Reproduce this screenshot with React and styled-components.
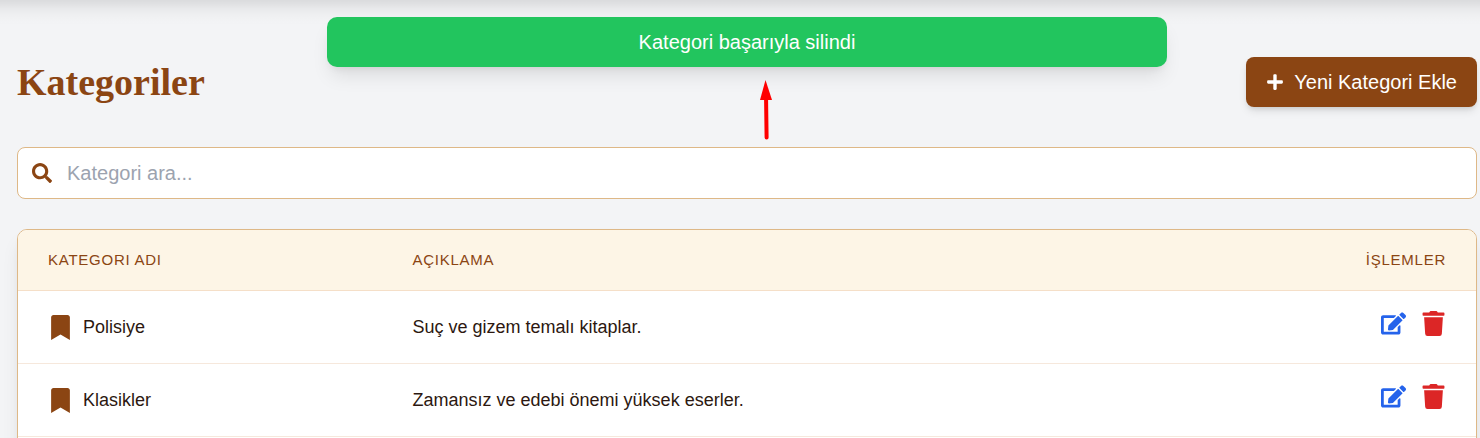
import React, { useState } from "react";
import styled, { createGlobalStyle } from "styled-components";
import { FaBookmark, FaEdit, FaPlus, FaSearch, FaTrash } from "react-icons/fa";

const GlobalStyle = createGlobalStyle`
  *, *::before, *::after { box-sizing: border-box; }
  body {
    margin: 0;
    background: #f3f4f6;
    color: #2c1810;
    font-family: "Liberation Sans", Arial, sans-serif;
    font-size: 20px;
    line-height: 30px;
  }
  svg { display: block; flex-shrink: 0; }
`;

const Page = styled.main`
  position: relative;
  height: 100vh;
  overflow: hidden;
  padding: 57px 3px 0 17px;
  background: linear-gradient(
      to bottom,
      rgba(0, 0, 0, 0.1) 0,
      rgba(0, 0, 0, 0.08) 4px,
      rgba(0, 0, 0, 0.045) 9px,
      rgba(0, 0, 0, 0.02) 15px,
      rgba(0, 0, 0, 0.005) 22px,
      transparent 27px
    )
    #f3f4f6;
`;

const ToastLayer = styled.div`
  position: absolute;
  top: 17px;
  left: 17px;
  right: 3px;
  display: flex;
  justify-content: center;
`;

const Toast = styled.div`
  width: 100%;
  max-width: 840px;
  padding: 10px 20px;
  border-radius: 10px;
  background: #22c55e;
  color: #fff;
  text-align: center;
  box-shadow: 0 12px 19px -4px rgba(0, 0, 0, 0.1),
    0 5px 8px -5px rgba(0, 0, 0, 0.1);
`;

const Pointer = styled.svg`
  position: absolute;
  top: 80px;
  left: 759px;
`;

const Header = styled.header`
  display: flex;
  align-items: center;
  justify-content: space-between;
  margin-bottom: 40px;
`;

const Title = styled.h1`
  margin: 0;
  color: #8b4513;
  font-family: "Liberation Serif", "Times New Roman", serif;
  font-size: 38px;
  font-weight: 700;
  line-height: 50px;
`;

const AddButton = styled.button`
  display: flex;
  align-items: center;
  gap: 10px;
  padding: 10px 20px;
  border: 0;
  border-radius: 8px;
  background: #8b4513;
  color: #fff;
  font: inherit;
  cursor: pointer;
  box-shadow: 0 5px 8px -1px rgba(0, 0, 0, 0.1),
    0 3px 5px -2px rgba(0, 0, 0, 0.1);
`;

const SearchBox = styled.label`
  display: flex;
  align-items: center;
  gap: 15px;
  height: 52px;
  margin-bottom: 30px;
  padding: 0 14px;
  border: 1px solid #deb887;
  border-radius: 8px;
  background: #fff;
  color: #8b4513;
`;

const SearchInput = styled.input`
  flex: 1;
  min-width: 0;
  padding: 0;
  border: 0;
  outline: 0;
  background: transparent;
  color: #2c1810;
  font: inherit;

  &::placeholder { color: #9ca3af; opacity: 1; }
`;

const Card = styled.section`
  overflow: hidden;
  padding-bottom: 24px;
  border: 1px solid #deb887;
  border-radius: 10px;
  background: #fff;
  box-shadow: 0 12px 19px -4px rgba(0, 0, 0, 0.1),
    0 5px 8px -5px rgba(0, 0, 0, 0.1);
`;

const Table = styled.table`
  width: 100%;
  border-spacing: 0;
  table-layout: fixed;
`;

const HeadCell = styled.th`
  width: ${({ $width }) => $width || "auto"};
  height: 61px;
  padding: 0 30px;
  border-bottom: 1px solid #f5dfc8;
  background: #fdf5e6;
  color: #8b4513;
  font-size: 15px;
  font-weight: 400;
  line-height: 20px;
  letter-spacing: 0.05em;
  text-align: ${({ $align }) => $align || "left"};
`;

const Cell = styled.td`
  height: 73px;
  padding: 20px 30px;
  border-bottom: 1px solid #f6e8dc;
  font-size: 18px;
  line-height: 25px;
  vertical-align: ${({ $valign }) => $valign || "middle"};
`;

const CategoryName = styled.div`
  display: flex;
  align-items: center;
  gap: 10px;

  svg { color: #8b4513; }
`;

const Actions = styled.div`
  display: flex;
  justify-content: flex-end;
  gap: 15px;
`;

const IconButton = styled.button`
  padding: 0;
  border: 0;
  background: none;
  color: ${({ $color }) => $color};
  cursor: pointer;
`;

const categories = [
  { name: "Polisiye", description: "Suç ve gizem temalı kitaplar." },
  { name: "Klasikler", description: "Zamansız ve edebi önemi yüksek eserler." },
];

export default function App() {
  const [query, setQuery] = useState("");
  const visible = categories.filter(({ name }) =>
    name.toLocaleLowerCase("tr").includes(query.toLocaleLowerCase("tr"))
  );

  return (
    <Page>
      <GlobalStyle />
      <Header>
        <Title>Kategoriler</Title>
        <AddButton type="button">
          <FaPlus size={18} />
          Yeni Kategori Ekle
        </AddButton>
      </Header>

      <SearchBox>
        <FaSearch size={20} />
        <SearchInput
          type="text"
          aria-label="Kategori ara"
          placeholder="Kategori ara..."
          value={query}
          onChange={(event) => setQuery(event.target.value)}
        />
      </SearchBox>

      <Card>
        <Table>
          <thead>
            <tr>
              <HeadCell scope="col" $width="25%">KATEGORI ADI</HeadCell>
              <HeadCell scope="col">AÇIKLAMA</HeadCell>
              <HeadCell scope="col" $width="15%" $align="right">İŞLEMLER</HeadCell>
            </tr>
          </thead>
          <tbody>
            {visible.map(({ name, description }) => (
              <tr key={name}>
                <Cell>
                  <CategoryName>
                    <FaBookmark size={25} />
                    {name}
                  </CategoryName>
                </Cell>
                <Cell>{description}</Cell>
                <Cell $valign="top">
                  <Actions>
                    <IconButton type="button" $color="#2563eb" aria-label="Düzenle">
                      <FaEdit size={25} />
                    </IconButton>
                    <IconButton type="button" $color="#dc2626" aria-label="Sil">
                      <FaTrash size={25} />
                    </IconButton>
                  </Actions>
                </Cell>
              </tr>
            ))}
          </tbody>
        </Table>
      </Card>

      <ToastLayer>
        <Toast role="status">Kategori başarıyla silindi</Toast>
      </ToastLayer>
      <Pointer width="14" height="60" viewBox="0 0 14 60" aria-hidden="true">
        <path d="M7 14 L7.6 57.5" stroke="#ff0000" strokeWidth="4" strokeLinecap="round" />
        <path d="M6.5 0 L13 20 H1 Z" fill="#ff0000" />
      </Pointer>
    </Page>
  );
}
